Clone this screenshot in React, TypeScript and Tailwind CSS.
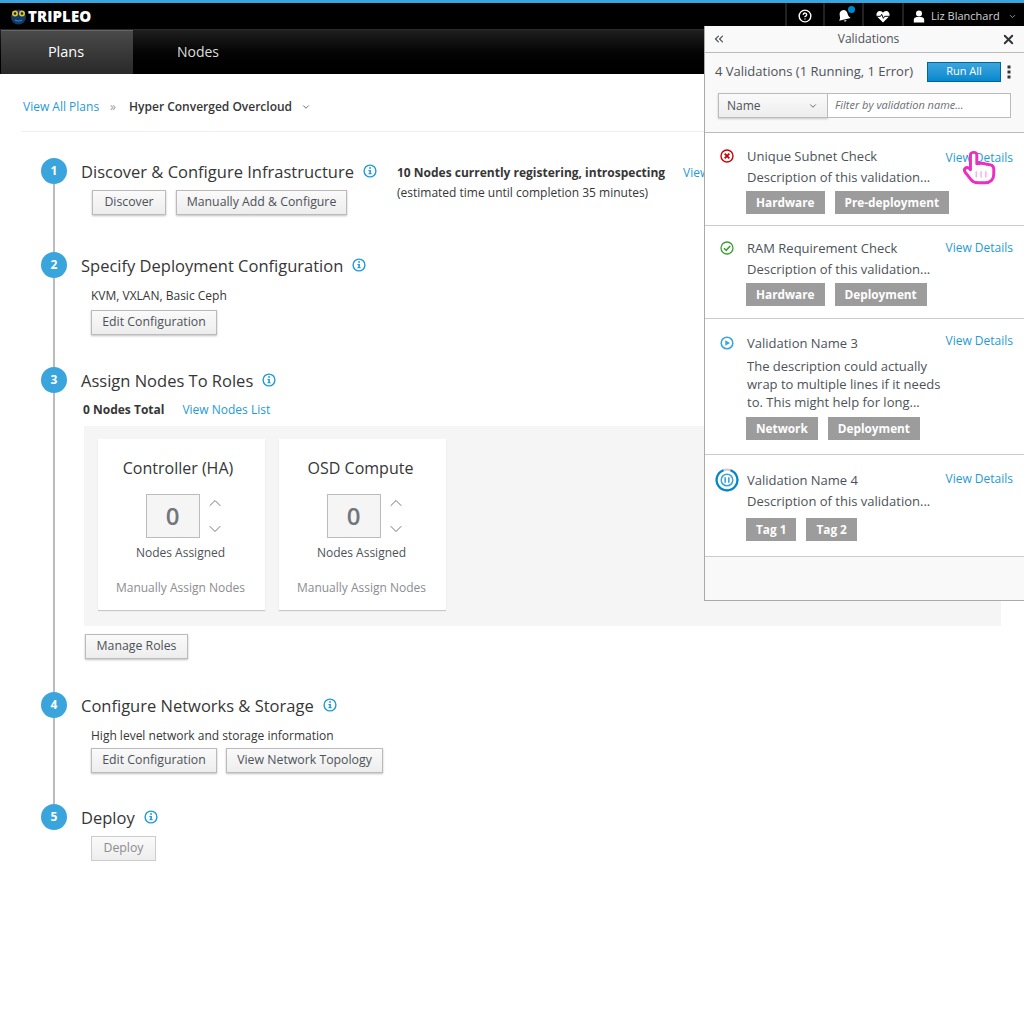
import { ChevronDown, ChevronUp, ChevronsLeft, X, CircleHelp } from "lucide-react";
import type { ReactNode } from "react";

const font = { fontFamily: '"Open Sans", sans-serif' };

function Btn({ children, disabled, className = "px-[10px]" }: { children: ReactNode; disabled?: boolean; className?: string }) {
  return (
    <button
      className={
        "h-[25px] border bg-gradient-to-b from-[#fafafa] to-[#ededed] text-[12.3px] font-medium leading-none " +
        (disabled ? "border-[#cccccc] text-[#8b8d8f] " : "border-[#bbbbbb] text-[#4d5258] shadow-[0_1px_2px_rgba(0,0,0,0.25)] ") +
        className
      }
    >
      {children}
    </button>
  );
}

function Info() {
  return (
    <svg width="14" height="14" viewBox="0 0 14 14" className="ml-[1px] shrink-0">
      <circle cx="7" cy="7" r="5.9" fill="none" stroke="#1f9ad6" strokeWidth="1.4" />
      <rect x="6.2" y="3.2" width="1.7" height="1.6" fill="#1f9ad6" />
      <path d="M5.4 5.9h2.5v3.4h.8v1H5.4v-1h.9V6.9h-.9z" fill="#1f9ad6" />
    </svg>
  );
}

function Step({ n, title, h, last, children }: { n: number; title: string; h: string; last?: boolean; children?: ReactNode }) {
  return (
    <div className={"flex gap-[14px] " + h}>
      <div className="flex w-[26px] shrink-0 flex-col items-center">
        <div className="flex h-[26px] w-[26px] shrink-0 items-center justify-center rounded-full bg-[#39a5dc] text-[12px] font-bold text-white">
          {n}
        </div>
        {!last && <div className="w-[2px] flex-1 bg-[#bbbbbb]" />}
      </div>
      <div className="min-w-0 flex-1">
        <div className="flex h-[26px] items-center gap-[8px]">
          <h2 className="relative top-[1px] text-[16.5px] font-medium leading-none text-[#363636]">{title}</h2>
          <Info />
        </div>
        {children}
      </div>
    </div>
  );
}

function RoleCard({ title, titleClass }: { title: string; titleClass: string }) {
  return (
    <div className="flex h-[171px] w-[167px] flex-col items-center bg-white pt-[17px] shadow-[0_1px_1px_rgba(0,0,0,0.18)]">
      <div className={"h-[24px] text-[16px] leading-[24px] text-[#363636] " + titleClass}>{title}</div>
      <div className="mt-[14px] flex items-center gap-[8px] pl-[4px]">
        <div className="flex h-[44px] w-[54px] items-center justify-center border border-[#bbbbbb] bg-[#f5f5f5] text-[24px] font-semibold text-[#72767b]">
          0
        </div>
        <div className="-my-[1px] flex h-[46px] w-[14px] flex-col items-center justify-between text-[#72767b]">
          <ChevronUp size={20} strokeWidth={1.2} className="shrink-0" />
          <ChevronDown size={20} strokeWidth={1.2} className="shrink-0" />
        </div>
      </div>
      <div className="mt-[6px] pr-[2px] text-[12px] leading-[18px] text-[#4d5258]">Nodes Assigned</div>
      <div className="mt-[17px] pr-[2px] text-[12px] leading-[18px] text-[#8b8d8f]">Manually Assign Nodes</div>
    </div>
  );
}

function Tag({ children }: { children: ReactNode }) {
  return <span className="flex h-[23px] items-center bg-[#9c9c9c] px-[10px] text-[11.8px] font-bold text-white">{children}</span>;
}

function StatusIcon({ kind }: { kind: "error" | "ok" | "run" | "pause" }) {
  if (kind === "error")
    return (
      <svg width="14" height="14" viewBox="0 0 14 14">
        <circle cx="7" cy="7" r="6" fill="none" stroke="#cc0000" strokeWidth="1.4" />
        <path d="M4.7 4.7l4.6 4.6M9.3 4.7l-4.6 4.6" stroke="#cc0000" strokeWidth="1.9" />
      </svg>
    );
  if (kind === "ok")
    return (
      <svg width="14" height="14" viewBox="0 0 14 14">
        <circle cx="7" cy="7" r="6" fill="none" stroke="#3f9c35" strokeWidth="1.3" />
        <path d="M4 7.2l2.2 2.2L10.2 5" fill="none" stroke="#3f9c35" strokeWidth="1.6" />
      </svg>
    );
  if (kind === "run")
    return (
      <svg width="14" height="14" viewBox="0 0 14 14">
        <circle cx="7" cy="7" r="5.8" fill="none" stroke="#39a5dc" strokeWidth="1.6" />
        <path d="M5.3 4.2v5.6L10 7z" fill="#39a5dc" />
      </svg>
    );
  return (
    <svg width="24" height="24" viewBox="0 0 24 24">
      <circle cx="12" cy="12" r="10.4" fill="none" stroke="#d0d0d0" strokeWidth="2.2" />
      <path d="M15.5 2.2A10.4 10.4 0 1 1 8.5 2.2" fill="none" stroke="#0088ce" strokeWidth="2.2" />
      <circle cx="12" cy="12" r="5.8" fill="none" stroke="#39a5dc" strokeWidth="1.5" />
      <path d="M10.2 9.3v5.4M13.8 9.3v5.4" stroke="#39a5dc" strokeWidth="1.6" />
    </svg>
  );
}

function ValidationItem({
  kind,
  title,
  desc,
  tags,
  h,
  top,
  linkTop,
  iconTop,
  descGap,
  tagGap,
}: {
  kind: "error" | "ok" | "run" | "pause";
  title: string;
  desc: string[];
  tags: string[];
  h: string;
  top: string;
  linkTop: string;
  iconTop: string;
  descGap: string;
  tagGap: string;
}) {
  return (
    <div className={"relative border-b border-[#cccccc] bg-white pl-[41px] pr-[11px] " + h + " " + top}>
      <div className={"absolute left-[22px] flex h-[14px] w-[0px] items-center justify-center " + iconTop}>
        <span className="shrink-0">
          <StatusIcon kind={kind} />
        </span>
      </div>
      <div className="flex items-start justify-between pl-[1px]">
        <div className="text-[13px] leading-[21px] text-[#4d5258]">{title}</div>
        <a className={"relative text-[12px] leading-[18px] text-[#1f9ad6] " + linkTop}>View Details</a>
      </div>
      <div className={"pl-[1px] text-[13px] leading-[18px] text-[#4d5258] " + descGap}>
        {desc.map((d) => (
          <div key={d}>{d}</div>
        ))}
      </div>
      <div className={"flex gap-[10px] " + tagGap}>
        {tags.map((t) => (
          <Tag key={t}>{t}</Tag>
        ))}
      </div>
    </div>
  );
}

function ValidationsPanel() {
  return (
    <aside className="absolute right-0 top-[26px] z-10 h-[575px] w-[320px] border-b border-l border-[#aaaaaa] bg-[#f9f9f9]">
      <div className="flex h-[27px] items-center justify-between border-b border-[#bbbbbb] pl-[7px] pr-[8px]">
        <ChevronsLeft size={14} className="text-[#4d5258]" />
        <span className="relative left-[5px] text-[12px] text-[#4d5258]">Validations</span>
        <X size={15} strokeWidth={3} className="text-[#30353a]" />
      </div>
      <div className="h-[80px] border-b border-[#bbbbbb] pl-[10px]">
        <div className="flex h-[37px] items-center">
          <span className="w-[212px] text-[13px] text-[#4d5258]">4 Validations (1 Running, 1 Error)</span>
          <button className="flex h-[20px] w-[74px] items-center justify-center border border-[#00659c] bg-gradient-to-b from-[#39a5dc] to-[#0088ce] text-[11px] text-white">
            Run All
          </button>
          <svg width="4" height="14" viewBox="0 0 4 14" className="ml-[6px]">
            <rect x="0.5" y="0.5" width="3" height="3" fill="#363636" />
            <rect x="0.5" y="5.5" width="3" height="3" fill="#363636" />
            <rect x="0.5" y="10.5" width="3" height="3" fill="#363636" />
          </svg>
        </div>
        <div className="ml-[3px] mt-[3px] flex h-[25px] w-[293px]">
          <div className="flex w-[110px] items-center justify-between border border-[#bbbbbb] bg-gradient-to-b from-[#fafafa] to-[#ededed] pl-[8px] pr-[9px] text-[12px] font-medium text-[#4d5258] shadow-[0_1px_2px_rgba(0,0,0,0.2)]">
            Name
            <ChevronDown size={10} className="text-[#4d5258]" />
          </div>
          <div className="flex flex-1 items-center border border-l-0 border-[#bbbbbb] bg-white pl-[7px] text-[11px] italic text-[#6a6e73]">
            Filter by validation name...
          </div>
        </div>
      </div>
      <ValidationItem
        kind="error"
        title="Unique Subnet Check"
        desc={["Description of this validation..."]}
        tags={["Hardware", "Pre-deployment"]}
        h="h-[93px]"
        top="pt-[13px]"
        linkTop="top-[3px]"
        iconTop="top-[16px]"
        descGap="mt-[1px]"
        tagGap="mt-[5px]"
      />
      <ValidationItem
        kind="ok"
        title="RAM Requirement Check"
        desc={["Description of this validation..."]}
        tags={["Hardware", "Deployment"]}
        h="h-[93px]"
        top="pt-[12px]"
        linkTop="top-[1px]"
        iconTop="top-[15px]"
        descGap="mt-[1px]"
        tagGap="mt-[5px]"
      />
      <ValidationItem
        kind="run"
        title="Validation Name 3"
        desc={["The description could actually", "wrap to multiple lines if it needs", "to. This might help for long..."]}
        tags={["Network", "Deployment"]}
        h="h-[136px]"
        top="pt-[14px]"
        linkTop="top-[-1px]"
        iconTop="top-[17px]"
        descGap="mt-[3px]"
        tagGap="mt-[6px]"
      />
      <ValidationItem
        kind="pause"
        title="Validation Name 4"
        desc={["Description of this validation..."]}
        tags={["Tag 1", "Tag 2"]}
        h="h-[102px]"
        top="pt-[15px]"
        linkTop=""
        iconTop="top-[18px]"
        descGap="mt-[1px]"
        tagGap="mt-[8px]"
      />
      {/* hand cursor from the mockup */}
      <svg width="36" height="36" viewBox="0 0 34 34" className="absolute left-[257px] top-[124px]">
        <path
          d="M8 4.5C8 1.5 14 1.5 14 4.5V13C18 12 21 12.5 23 13.5C27 13.5 30 15 30 18V23C30 28 27 31 22 31H15C12 31 10 30 8.5 28L3 21C1 18 4 15.5 6.5 17L8 18.5Z"
          fill="rgba(255,255,255,0.8)"
          stroke="#ec2fc0"
          strokeWidth="2.8"
          strokeLinejoin="round"
        />
        <path d="M13.5 20v6M18 20v6M22.5 20v6" stroke="#f7b0e6" strokeWidth="1.4" />
      </svg>
    </aside>
  );
}

function Owl() {
  return (
    <svg width="17" height="17" viewBox="0 0 17 17" className="shrink-0">
      <circle cx="8.5" cy="9" r="7.5" fill="#123a66" />
      <circle cx="5" cy="5.5" r="3" fill="#d8c23c" />
      <circle cx="12" cy="5.5" r="3" fill="#d8c23c" />
      <circle cx="5" cy="5.5" r="1.2" fill="#1a1a1a" />
      <circle cx="12" cy="5.5" r="1.2" fill="#1a1a1a" />
      <path d="M5 12q3.5 2 7 0" stroke="#2f86c9" strokeWidth="1.2" fill="none" />
    </svg>
  );
}

function MastIcon({ children, w }: { children: ReactNode; w: string }) {
  return <div className={"flex h-full items-center justify-center border-l-2 border-[#222222] " + w}>{children}</div>;
}

export default function App() {
  return (
    <div className="relative min-h-screen bg-white" style={font}>
      <header>
        <div className="flex h-[29px] items-center justify-between border-t-[3px] border-[#39a5dc] bg-black">
          <div className="flex items-center gap-[1px] pl-[10px]">
            <Owl />
            <span className="text-[15px] font-extrabold leading-none tracking-[0.1px] text-white">TRIPLEO</span>
          </div>
          <div className="flex h-full items-center">
            <MastIcon w="w-[38px]">
              <CircleHelp size={14} strokeWidth={2.4} className="text-white" />
            </MastIcon>
            <MastIcon w="w-[39px]">
              <span className="relative">
                <svg width="16" height="16" viewBox="0 0 16 16">
                  <g transform="rotate(-14 8 8)">
                    <path d="M8 2c-2.5 0-4 2-4 4.5 0 3-1 4-2 5h12c-1-1-2-2-2-5C12 4 10.5 2 8 2zM6.5 12.5a1.6 1.6 0 0 0 3 0z" fill="#ffffff" />
                  </g>
                </svg>
                <span className="absolute right-[-3px] top-[-2px] h-[7px] w-[7px] rounded-full bg-[#0088ce]" />
              </span>
            </MastIcon>
            <MastIcon w="w-[40px]">
              <svg width="14" height="13" viewBox="0 0 14 13">
                <path d="M7 12.5L1.2 6.8C-.5 4.8.8 1 3.8 1 5.3 1 6.3 1.8 7 2.8 7.7 1.8 8.7 1 10.2 1c3 0 4.3 3.8 2.6 5.8z" fill="#ffffff" />
                <path d="M.8 6.3h3.7l1.2-2 1.7 4 1.2-2h4.6" fill="none" stroke="#000000" strokeWidth="1" />
              </svg>
            </MastIcon>
            <div className="flex h-full w-[122px] items-center border-l-2 border-[#222222] pl-[9px]">
              <svg width="12" height="13" viewBox="0 0 12 13">
                <circle cx="6" cy="3.5" r="3" fill="#ffffff" />
                <path d="M.8 12.5V9.8C.8 8 2.5 7 4 7h4c1.5 0 3.2 1 3.2 2.8v2.7z" fill="#ffffff" />
              </svg>
              <span className="ml-[6px] text-[11px] text-[#d1d1d1]">Liz Blanchard</span>
              <ChevronDown size={9} strokeWidth={2} className="ml-[8px] text-[#bbbbbb]" />
            </div>
          </div>
        </div>
        <nav className="flex h-[45px] border-t border-[#2a2a2a] bg-gradient-to-b from-[#1f1f1f] to-black pl-[1px]">
          <div className="flex w-[132px] items-center justify-center border-t border-[#666666] bg-gradient-to-b from-[#4a4a4a] to-[#292929] pb-[2px] pr-[2px] text-[14.5px] text-white">
            Plans
          </div>
          <div className="flex w-[130px] items-center justify-center pb-[2px] text-[14px] text-[#dddddd]">Nodes</div>
        </nav>
      </header>

      <main className="pl-[21px] pr-[23px]">
        <div className="flex h-[58px] items-center border-b border-[#eeeeee] pl-[2px] pt-[9px] text-[12px]">
          <a className="text-[#1f9ad6]">View All Plans</a>
          <span className="ml-[11px] text-[12px] text-[#9c9c9c]">»</span>
          <span className="ml-[13px] font-semibold text-[#363636]">Hyper Converged Overcloud</span>
          <ChevronDown size={10} strokeWidth={2} className="ml-[9px] text-[#4d5258]" />
        </div>

        <div className="pl-[20px] pt-[26px]">
          <Step n={1} title="Discover & Configure Infrastructure" h="h-[94px]">
            <div className="relative mt-[6px] flex gap-[10px] pl-[11px]">
              <Btn className="w-[74px]">Discover</Btn>
              <Btn className="w-[171px]">Manually Add & Configure</Btn>
              <div className="absolute left-[316px] top-[-27px] text-[12px] leading-[20px] text-[#363636]">
                <div className="flex">
                  <span className="font-bold">10 Nodes currently registering, introspecting</span>
                  <a className="ml-[18px] text-[#1f9ad6]">View</a>
                </div>
                <div>(estimated time until completion 35 minutes)</div>
              </div>
            </div>
          </Step>

          <Step n={2} title="Specify Deployment Configuration" h="h-[115px]">
            <div className="mt-[9px] pl-[10px] text-[12px] leading-[18px] text-[#363636]">KVM, VXLAN, Basic Ceph</div>
            <div className="mt-[3px] pl-[10px]">
              <Btn className="w-[126px]">Edit Configuration</Btn>
            </div>
          </Step>

          <Step n={3} title="Assign Nodes To Roles" h="h-[325px]">
            <div className="mt-[8px] flex h-[18px] items-center gap-[18px] pl-[2px] text-[12px]">
              <span className="font-bold text-[#363636]">0 Nodes Total</span>
              <a className="text-[#1f9ad6]">View Nodes List</a>
            </div>
            <div className="ml-[3px] mt-[7px] flex h-[200px] gap-[14px] bg-[#f5f5f5] pl-[14px] pt-[13px]">
              <RoleCard title="Controller (HA)" titleClass="pr-[7px]" />
              <RoleCard title="OSD Compute" titleClass="pr-[4px]" />
            </div>
            <div className="mt-[6px] pl-[4px]">
              <Btn className="w-[103px]">Manage Roles</Btn>
            </div>
          </Step>

          <Step n={4} title="Configure Networks & Storage" h="h-[112px]">
            <div className="mt-[9px] pl-[10px] text-[12px] leading-[18px] text-[#363636]">High level network and storage information</div>
            <div className="mt-[3px] flex gap-[9px] pl-[10px]">
              <Btn className="w-[126px]">Edit Configuration</Btn>
              <Btn className="w-[157px]">View Network Topology</Btn>
            </div>
          </Step>

          <Step n={5} title="Deploy" h="h-[60px]" last>
            <div className="mt-[4px] pl-[10px]">
              <Btn disabled className="w-[65px]">
                Deploy
              </Btn>
            </div>
          </Step>
        </div>
      </main>

      <ValidationsPanel />
    </div>
  );
}
